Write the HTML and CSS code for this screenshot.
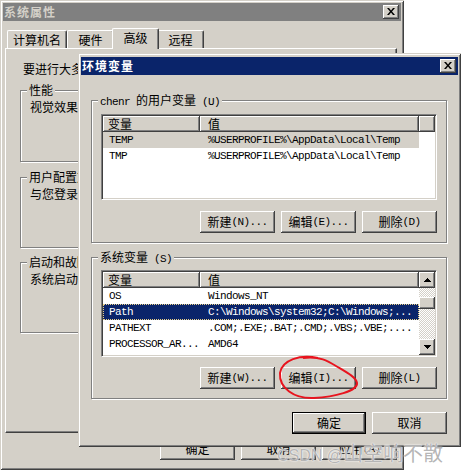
FILE: index.html
```html
<!DOCTYPE html>
<html lang="zh-CN">
<head>
<meta charset="utf-8">
<title>环境变量</title>
<link rel="stylesheet" href="styles.css">
</head>
<body>
<div class="win back">
  <div class="title inactive">
    <span class="ttext">系统属性</span>
    <span class="xbtn"><svg width="16" height="14" viewBox="0 0 16 14"><path d="M4 3h2l2 2.5 2-2.5h2l-3 3.5 3 3.5h-2l-2-2.5-2 2.5h-2l3-3.5z"/></svg></span>
  </div>
  <div class="tabs">
    <div class="tab">计算机名</div>
    <div class="tab">硬件</div>
    <div class="tab sel">高级</div>
    <div class="tab">远程</div>
  </div>
  <div class="panel">
    <p class="note">要进行大多数更改，您必须作为管理员登录。</p>
    <div class="grp pg1"><span class="cap">性能</span><p class="gtext">视觉效果，处理器计划，内存使用，以及虚拟内存</p></div>
    <div class="grp pg2"><span class="cap">用户配置文件</span><p class="gtext">与您登录有关的桌面设置</p></div>
    <div class="grp pg3"><span class="cap">启动和故障恢复</span><p class="gtext">系统启动，系统失败和调试信息</p></div>
  </div>
  <div class="foot">
    <span class="btn">确定</span><span class="btn">取消</span><span class="btn">应用<span class="m">(A)</span></span>
  </div>
</div>

<div class="win env">
  <div class="title active">
    <span class="ttext">环境变量</span>
    <span class="xbtn"><svg width="16" height="14" viewBox="0 0 16 14"><path d="M4 3h2l2 2.5 2-2.5h2l-3 3.5 3 3.5h-2l-2-2.5-2 2.5h-2l3-3.5z"/></svg></span>
  </div>
  <div class="ebody">
    <div class="grp eg1">
      <span class="cap"><span class="m">chenr </span>的用户变量<span class="m"> (U)</span></span>
      <div class="list">
        <div class="lcol">
          <div class="hdr"><span class="c1">变量</span><span class="c2">值</span><span class="c3"></span></div>
          <div class="r inact"><span class="c1 m">TEMP</span><span class="c2 m">%USERPROFILE%\AppData\Local\Temp</span></div>
          <div class="r"><span class="c1 m">TMP</span><span class="c2 m">%USERPROFILE%\AppData\Local\Temp</span></div>
        </div>
      </div>
      <div class="btns">
        <span class="btn">新建<span class="m"> (N)...</span></span>
        <span class="btn">编辑<span class="m"> (E)...</span></span>
        <span class="btn">删除<span class="m"> (D)</span></span>
      </div>
    </div>
    <div class="grp eg2">
      <span class="cap">系统变量<span class="m"> (S)</span></span>
      <div class="list tall">
        <div class="lcol">
          <div class="hdr"><span class="c1">变量</span><span class="c2">值</span></div>
          <div class="r"><span class="c1 m">OS</span><span class="c2 m">Windows_NT</span></div>
          <div class="r sel"><span class="c1 m">Path</span><span class="c2 m">C:\Windows\system32;C:\Windows;...</span></div>
          <div class="r"><span class="c1 m">PATHEXT</span><span class="c2 m">.COM;.EXE;.BAT;.CMD;.VBS;.VBE;....</span></div>
          <div class="r"><span class="c1 m">PROCESSOR_AR...</span><span class="c2 m">AMD64</span></div>
        </div>
        <div class="sb">
          <span class="sbb"><svg width="7" height="4" viewBox="0 0 7 4"><path d="M3 0h1v1h1v1h1v1h1v1H0V3h1V2h1V1h1z"/></svg></span>
          <span class="sbb thumb"></span>
          <span class="sp"></span>
          <span class="sbb"><svg width="7" height="4" viewBox="0 0 7 4"><path d="M0 0h7v1H6v1H5v1H4v1H3V3H2V2H1V1H0z"/></svg></span>
        </div>
      </div>
      <div class="btns">
        <span class="btn">新建<span class="m"> (W)...</span></span>
        <span class="btn">编辑<span class="m"> (I)...</span></span>
        <span class="btn">删除<span class="m"> (L)</span></span>
      </div>
    </div>
    <div class="efoot">
      <span class="btn def">确定</span><span class="btn">取消</span>
    </div>
  </div>
</div>

<svg class="mark" width="463" height="473" viewBox="0 0 463 473">
  <path d="M318 358 C300 354 282 360 280 373 C279 388 294 399 314 398 C334 397 358 391 357 383 C356 377 346 372 336 366 C328 361 320 356 303 358" fill="none" stroke="#e8141e" stroke-width="2"/>
</svg>
<div class="wm"><span class="wl">CSDN @</span>山空响不散</div>
</body>
</html>
```

FILE: styles.css
```css
* { box-sizing: border-box; }
html, body { margin: 0; padding: 0; }
body {
  width: 463px; height: 473px; position: relative; overflow: hidden;
  background: #fff; color: #000;
  font: 12px/14px "Noto Sans CJK SC", "Liberation Sans", sans-serif;
}
p { margin: 0; }
.m { font-family: "Liberation Mono", "DejaVu Sans Mono", monospace; font-size: 11px; letter-spacing: -0.6px; }

.win {
  position: absolute; background: #d4d0c8; padding: 3px;
  display: flex; flex-direction: column;
  box-shadow: inset 1px 1px #d4d0c8, inset -1px -1px #404040, inset 2px 2px #fff, inset -2px -2px #808080;
}
.back { left: 0; top: 0; width: 404px; height: 470px; }
.env { left: 78px; top: 53px; width: 383px; height: 394px; padding-top: 4px; }

.title {
  flex: none; height: 18px; display: flex; align-items: center; justify-content: space-between;
  padding: 0 2px 0 1px; font-weight: bold;
}
.title.inactive { background: #808080; color: #d4d0c8; }
.title.active { background: #0a246a; color: #fff; }
.ttext { letter-spacing: 1px; }
.xbtn {
  width: 16px; height: 14px; display: flex; background: #d4d0c8;
  box-shadow: inset -1px -1px #404040, inset 1px 1px #fff, inset -2px -2px #808080;
}

.tabs { flex: none; height: 27px; display: flex; align-items: flex-end; padding-left: 4px; }
.tab {
  height: 18px; line-height: 17px; padding: 0 5px; min-width: 47px; text-align: center;
  border: 1px solid; border-color: #fff #404040 transparent #fff; border-bottom: 0;
  border-radius: 2px 2px 0 0; box-shadow: inset -1px 0 #808080; background: #d4d0c8;
}
.tab.sel { height: 21px; line-height: 18px; margin: 0 -2px -1px; position: relative; z-index: 1; }

.panel {
  flex: none; height: 385px; margin: 0 4px 0 2px; padding: 13px 12px 0 14px;
  border: 1px solid; border-color: #fff #404040 #404040 #fff; box-shadow: inset -1px -1px #808080;
}
.note { padding-left: 3px; white-space: nowrap; }

.grp { position: relative; border: 1px solid #808080; box-shadow: inset 1px 1px #fff, 1px 1px #fff; }
.cap { position: absolute; top: -8px; left: 6px; padding: 0 2px; background: #d4d0c8; white-space: nowrap; line-height: 14px; }
.gtext { padding: 9px 9px 0; white-space: nowrap; }
.pg1 { margin-top: 14px; height: 72px; }
.pg2 { margin-top: 15px; height: 71px; }
.pg3 { margin-top: 14px; height: 71px; }

.foot { display: flex; gap: 6px; margin: 5px 0 0 157px; }

.btn {
  width: 75px; height: 22px; display: flex; align-items: center; justify-content: center;
  background: #d4d0c8; white-space: nowrap;
  box-shadow: inset -1px -1px #404040, inset 1px 1px #fff, inset -2px -2px #808080;
}
.btn.def {
  width: 74px;
  box-shadow: inset 0 0 0 1px #000, inset -2px -2px #404040, inset 2px 2px #fff, inset -3px -3px #808080;
}

.ebody { flex: 1; display: flex; flex-direction: column; padding: 25px 11px 0 10px; }
.eg1 { height: 143px; padding: 13px 9px 0; }
.eg2 { height: 142px; margin-top: 14px; padding: 12px 9px 0; }
.btns { display: flex; justify-content: flex-end; gap: 6px; margin-top: 11px; }
.eg2 .btns { margin-top: 10px; }
.efoot { display: flex; justify-content: flex-end; gap: 6px; margin-top: 13px; }

.list {
  height: 86px; display: flex; padding: 1px; background: #fff;
  border: 1px solid; border-color: #808080 #fff #fff #808080;
  box-shadow: inset 1px 1px #404040, inset -1px -1px #d4d0c8;
}
.list.tall { height: 87px; }
.lcol { flex: 1; min-width: 0; display: flex; flex-direction: column; }
.hdr { flex: none; height: 16px; display: flex; }
.hdr span {
  background: #d4d0c8; line-height: 16px; padding-left: 5px;
  box-shadow: inset -1px -1px #404040, inset 1px 1px #fff, inset -2px -2px #808080;
}
.c1 { flex: none; width: 97px; }
.c2 { flex: none; width: 219px; }
.c3 { flex: 1; }
.hdr .c2 { padding-left: 8px; }
.r { display: flex; width: 316px; height: 16px; line-height: 16px; }
.r span { white-space: nowrap; overflow: hidden; }
.r .c1 { padding-left: 6px; }
.r .c2 { padding-left: 8px; }
.r.inact { background: #d4d0c8; }
.r.sel { background: #0a246a; color: #fff; outline: 1px dotted #e8d088; outline-offset: -1px; }

.sb {
  flex: none; width: 16px; display: flex; flex-direction: column;
  background: repeating-conic-gradient(#fff 0 25%, #d4d0c8 0 50%) 0 0 / 2px 2px;
}
.sbb {
  flex: none; height: 16px; display: flex; align-items: center; justify-content: center; background: #d4d0c8;
  box-shadow: inset -1px -1px #404040, inset 1px 1px #fff, inset -2px -2px #808080;
}
.thumb { height: 12px; margin-top: 9px; }
.sp { flex: 1; }

.mark { position: absolute; left: 0; top: 0; pointer-events: none; }
.wm {
  position: absolute; left: 277px; top: 440px; font-size: 20px; line-height: 26px; white-space: nowrap;
  color: rgba(150, 150, 150, 0.7); text-shadow: 0 0 2px #fff, 0 0 1px #fff;
  font-family: "Noto Sans CJK SC", sans-serif;
}
.wl { font-family: "Liberation Sans", sans-serif; font-size: 16px; }
```
